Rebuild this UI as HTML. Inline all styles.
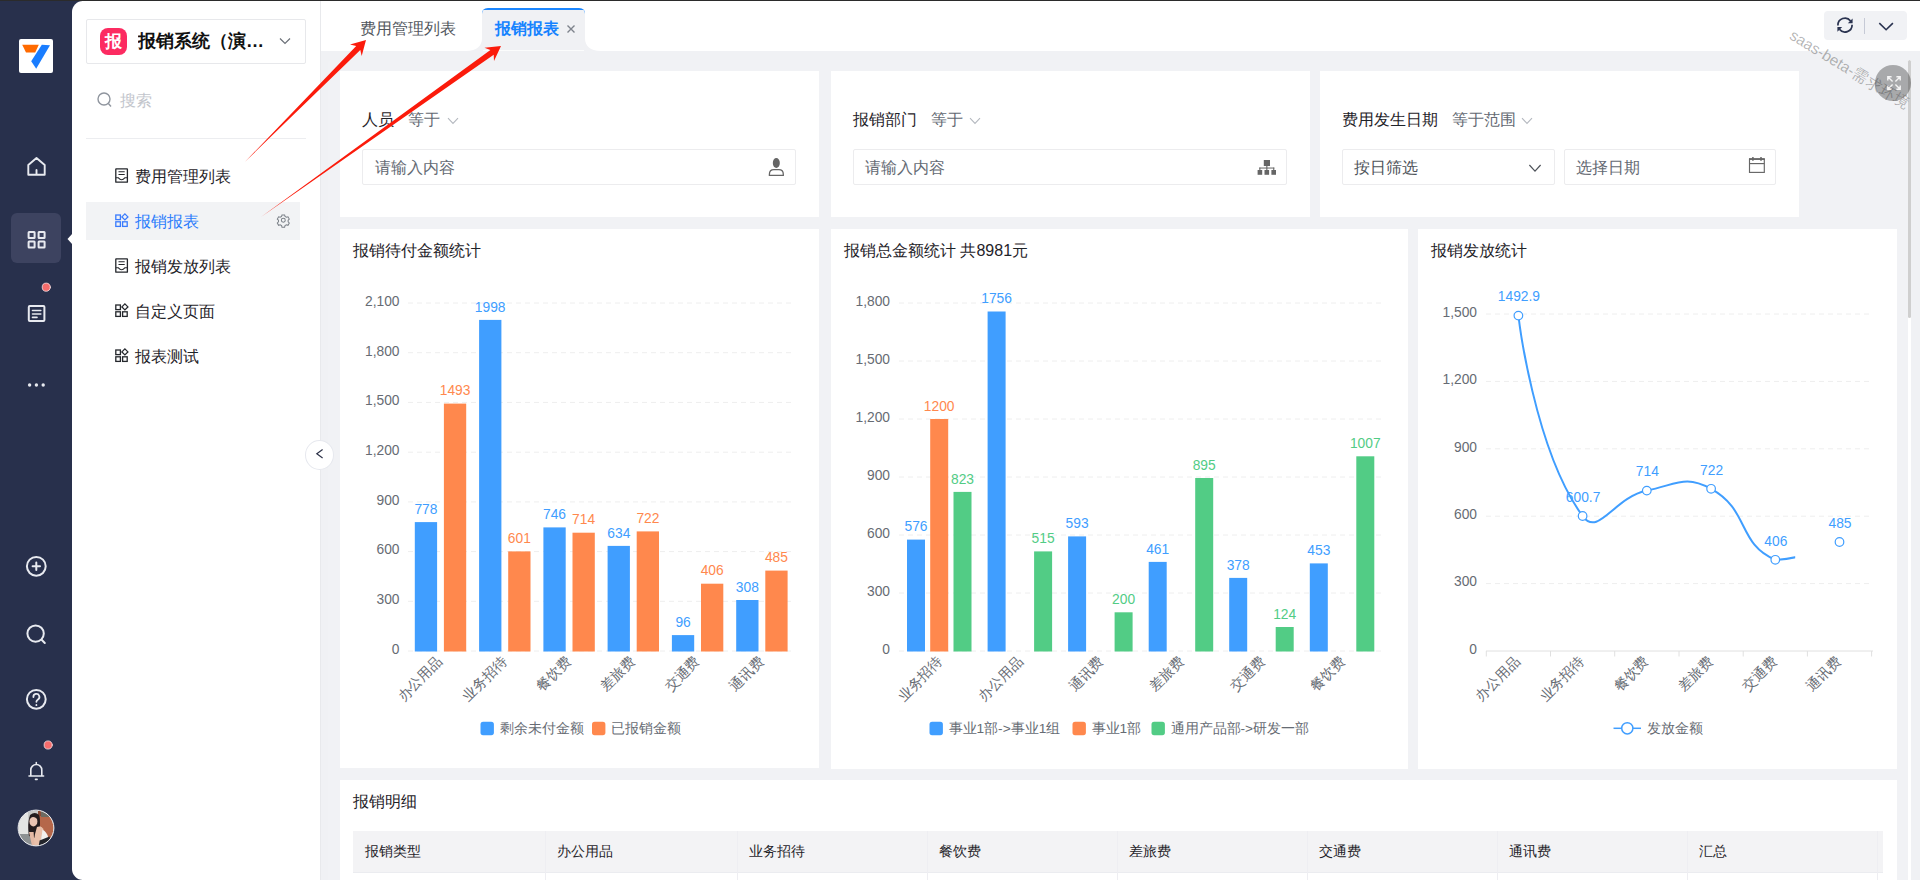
<!DOCTYPE html>
<html lang="zh"><head><meta charset="utf-8"><title>报销报表</title><style>
*{box-sizing:border-box;margin:0;padding:0}
html,body{width:1920px;height:880px;overflow:hidden}
body{position:relative;background:#f0f1f4;font-family:"Liberation Sans",sans-serif;color:#1f2329;font-size:16px}
.abs{position:absolute}
.t{position:absolute;white-space:nowrap;line-height:20px;height:20px}
#rail{left:0;top:0;width:82px;height:880px;background:#28304c}
#menu{left:72px;top:1px;width:249px;height:879px;background:#fff;border-radius:11px 0 0 11px;border-right:1px solid #e8e9ec}
#topline{left:0;top:0;width:1920px;height:1px;background:#2b2b2b;z-index:50}
#tabs{left:321px;top:1px;width:1599px;height:50px;background:#fff}
.panel{position:absolute;background:#fff}
.inp{position:absolute;height:36px;border:1px solid #ececee;border-radius:2px;background:#fff}
.g6{color:#646a73}
svg{position:absolute;overflow:visible}
svg text{font-family:"Liberation Sans",sans-serif}
</style></head><body>

<div class="abs" style="left:328px;top:60px;width:1583px;height:830px;background:#f1f2f5;border-radius:4px 0 0 0"></div>
<div class="panel" style="left:340px;top:71px;width:479px;height:146px"></div>
<div class="panel" style="left:831px;top:71px;width:479px;height:146px"></div>
<div class="panel" style="left:1320px;top:71px;width:479px;height:146px"></div>

<div class="t" style="left:362px;top:110px">人员</div>
<div class="t g6" style="left:408px;top:110px">等于</div>
<svg style="left:447px;top:117px" width="12" height="8" viewBox="0 0 12 8" fill="none" stroke="#b4b8bf" stroke-width="1.1"><path d="M1 1.2 L6 6.4 L11 1.2"/></svg>
<div class="inp" style="left:362px;top:149px;width:434px"></div>
<div class="t g6" style="left:375px;top:158px">请输入内容</div>
<svg style="left:760px;top:150px" width="32" height="32" viewBox="760 150 32 32"><ellipse cx="776.3" cy="163" rx="3.5" ry="4.9" fill="#666"/><path d="M769.4 175.4 H783.3 V174.2 Q783.3 169.7 778.8 169.7 H773.9 Q769.4 169.7 769.4 174.2 Z" fill="none" stroke="#666" stroke-width="1.3"/></svg>

<div class="t" style="left:853px;top:110px">报销部门</div>
<div class="t g6" style="left:931px;top:110px">等于</div>
<svg style="left:969px;top:117px" width="12" height="8" viewBox="0 0 12 8" fill="none" stroke="#b4b8bf" stroke-width="1.1"><path d="M1 1.2 L6 6.4 L11 1.2"/></svg>
<div class="inp" style="left:853px;top:149px;width:434px"></div>
<div class="t g6" style="left:865px;top:158px">请输入内容</div>
<svg style="left:1250px;top:150px" width="32" height="32" viewBox="1250 150 32 32" fill="#666"><rect x="1263.8" y="160" width="6.2" height="6"/><rect x="1257.6" y="170" width="4.6" height="4.8"/><rect x="1264.5" y="170" width="4.6" height="4.8"/><rect x="1271.4" y="170" width="4.6" height="4.8"/><rect x="1259.3" y="167.4" width="15" height="1.3" fill="#8a8a8a"/><rect x="1266.3" y="165.5" width="1.1" height="5"/><rect x="1259.3" y="167.6" width="1.1" height="2.6"/><rect x="1273.2" y="167.6" width="1.1" height="2.6"/></svg>

<div class="t" style="left:1342px;top:110px">费用发生日期</div>
<div class="t g6" style="left:1452px;top:110px">等于范围</div>
<svg style="left:1521px;top:117px" width="12" height="8" viewBox="0 0 12 8" fill="none" stroke="#b4b8bf" stroke-width="1.1"><path d="M1 1.2 L6 6.4 L11 1.2"/></svg>
<div class="inp" style="left:1342px;top:149px;width:213px"></div>
<div class="t" style="left:1354px;top:158px;color:#4e535a">按日筛选</div>
<svg style="left:1529px;top:164px" width="12" height="9" viewBox="0 0 12 9" fill="none" stroke="#4e535a" stroke-width="1.2"><path d="M0.4 1 L6 7.2 L11.6 1"/></svg>
<div class="inp" style="left:1564px;top:149px;width:212px"></div>
<div class="t g6" style="left:1576px;top:158px">选择日期</div>
<svg style="left:1740px;top:150px" width="32" height="32" viewBox="1740 150 32 32" fill="none" stroke="#666" stroke-width="1.15"><rect x="1749.5" y="159.2" width="14.8" height="13.2"/><path d="M1749.5 163.6 H1764.3"/><path d="M1749 159 H1764.8" stroke-width="1.7"/><path d="M1752.9 157 V160.8 M1761 157 V160.8" stroke-width="1.5"/></svg>

<div class="panel" style="left:340px;top:229px;width:479px;height:539px"></div>
<div class="panel" style="left:831px;top:229px;width:577px;height:540px"></div>
<div class="panel" style="left:1418px;top:229px;width:479px;height:540px"></div>
<div class="t" style="left:353px;top:241px">报销待付金额统计</div>
<div class="t" style="left:844px;top:241px">报销总金额统计 共8981元</div>
<div class="t" style="left:1431px;top:241px">报销发放统计</div>
<svg style="left:0;top:0" width="1920" height="880" viewBox="0 0 1920 880"><line x1="408" x2="791" y1="651.0" y2="651.0" stroke="#eeeeee" stroke-width="1" stroke-dasharray="5 4"/><line x1="408" x2="791" y1="601.3" y2="601.3" stroke="#eeeeee" stroke-width="1" stroke-dasharray="5 4"/><line x1="408" x2="791" y1="551.6" y2="551.6" stroke="#eeeeee" stroke-width="1" stroke-dasharray="5 4"/><line x1="408" x2="791" y1="501.9" y2="501.9" stroke="#eeeeee" stroke-width="1" stroke-dasharray="5 4"/><line x1="408" x2="791" y1="452.2" y2="452.2" stroke="#eeeeee" stroke-width="1" stroke-dasharray="5 4"/><line x1="408" x2="791" y1="402.4" y2="402.4" stroke="#eeeeee" stroke-width="1" stroke-dasharray="5 4"/><line x1="408" x2="791" y1="352.7" y2="352.7" stroke="#eeeeee" stroke-width="1" stroke-dasharray="5 4"/><line x1="408" x2="791" y1="303.0" y2="303.0" stroke="#eeeeee" stroke-width="1" stroke-dasharray="5 4"/><text transform="translate(399.5,653.8) scale(0.92,1)" text-anchor="end" font-size="15" fill="#666b73">0</text><text transform="translate(399.5,604.1) scale(0.92,1)" text-anchor="end" font-size="15" fill="#666b73">300</text><text transform="translate(399.5,554.4) scale(0.92,1)" text-anchor="end" font-size="15" fill="#666b73">600</text><text transform="translate(399.5,504.7) scale(0.92,1)" text-anchor="end" font-size="15" fill="#666b73">900</text><text transform="translate(399.5,455.0) scale(0.92,1)" text-anchor="end" font-size="15" fill="#666b73">1,200</text><text transform="translate(399.5,405.2) scale(0.92,1)" text-anchor="end" font-size="15" fill="#666b73">1,500</text><text transform="translate(399.5,355.5) scale(0.92,1)" text-anchor="end" font-size="15" fill="#666b73">1,800</text><text transform="translate(399.5,305.8) scale(0.92,1)" text-anchor="end" font-size="15" fill="#666b73">2,100</text><rect x="414.8" y="522.1" width="22.3" height="129.4" fill="#409eff"/><text transform="translate(425.9,513.7) scale(0.92,1)" text-anchor="middle" font-size="15" fill="#409eff">778</text><rect x="443.9" y="403.6" width="22.3" height="247.9" fill="#ff884d"/><text transform="translate(455.1,395.2) scale(0.92,1)" text-anchor="middle" font-size="15" fill="#ff884d">1493</text><rect x="479.1" y="319.9" width="22.3" height="331.6" fill="#409eff"/><text transform="translate(490.2,311.5) scale(0.92,1)" text-anchor="middle" font-size="15" fill="#409eff">1998</text><rect x="508.2" y="551.4" width="22.3" height="100.1" fill="#ff884d"/><text transform="translate(519.3,543.0) scale(0.92,1)" text-anchor="middle" font-size="15" fill="#ff884d">601</text><rect x="543.4" y="527.4" width="22.3" height="124.1" fill="#409eff"/><text transform="translate(554.5,519.0) scale(0.92,1)" text-anchor="middle" font-size="15" fill="#409eff">746</text><rect x="572.5" y="532.7" width="22.3" height="118.8" fill="#ff884d"/><text transform="translate(583.6,524.3) scale(0.92,1)" text-anchor="middle" font-size="15" fill="#ff884d">714</text><rect x="607.6" y="545.9" width="22.3" height="105.6" fill="#409eff"/><text transform="translate(618.8,537.5) scale(0.92,1)" text-anchor="middle" font-size="15" fill="#409eff">634</text><rect x="636.7" y="531.4" width="22.3" height="120.1" fill="#ff884d"/><text transform="translate(647.9,523.0) scale(0.92,1)" text-anchor="middle" font-size="15" fill="#ff884d">722</text><rect x="671.9" y="635.1" width="22.3" height="16.4" fill="#409eff"/><text transform="translate(683.1,626.7) scale(0.92,1)" text-anchor="middle" font-size="15" fill="#409eff">96</text><rect x="701.0" y="583.7" width="22.3" height="67.8" fill="#ff884d"/><text transform="translate(712.2,575.3) scale(0.92,1)" text-anchor="middle" font-size="15" fill="#ff884d">406</text><rect x="736.2" y="600.0" width="22.3" height="51.5" fill="#409eff"/><text transform="translate(747.3,591.6) scale(0.92,1)" text-anchor="middle" font-size="15" fill="#409eff">308</text><rect x="765.3" y="570.6" width="22.3" height="80.9" fill="#ff884d"/><text transform="translate(776.4,562.2) scale(0.92,1)" text-anchor="middle" font-size="15" fill="#ff884d">485</text><text transform="translate(443.1,662.5) rotate(-45)" text-anchor="end" font-size="14" fill="#666b73">办公用品</text><text transform="translate(507.4,662.5) rotate(-45)" text-anchor="end" font-size="14" fill="#666b73">业务招待</text><text transform="translate(571.7,662.5) rotate(-45)" text-anchor="end" font-size="14" fill="#666b73">餐饮费</text><text transform="translate(636.0,662.5) rotate(-45)" text-anchor="end" font-size="14" fill="#666b73">差旅费</text><text transform="translate(700.3,662.5) rotate(-45)" text-anchor="end" font-size="14" fill="#666b73">交通费</text><text transform="translate(764.5,662.5) rotate(-45)" text-anchor="end" font-size="14" fill="#666b73">通讯费</text><rect x="480.5" y="721.8" width="13.4" height="13.4" rx="2.6" fill="#409eff"/><text x="499.5" y="732.8" font-size="13.7" fill="#666b73">剩余未付金额</text><rect x="592" y="721.8" width="13.4" height="13.4" rx="2.6" fill="#ff884d"/><text x="611" y="732.8" font-size="13.7" fill="#666b73">已报销金额</text></svg><svg style="left:0;top:0" width="1920" height="880" viewBox="0 0 1920 880"><line x1="899" x2="1381" y1="651.0" y2="651.0" stroke="#eeeeee" stroke-width="1" stroke-dasharray="5 4"/><line x1="899" x2="1381" y1="593.0" y2="593.0" stroke="#eeeeee" stroke-width="1" stroke-dasharray="5 4"/><line x1="899" x2="1381" y1="535.0" y2="535.0" stroke="#eeeeee" stroke-width="1" stroke-dasharray="5 4"/><line x1="899" x2="1381" y1="477.0" y2="477.0" stroke="#eeeeee" stroke-width="1" stroke-dasharray="5 4"/><line x1="899" x2="1381" y1="419.0" y2="419.0" stroke="#eeeeee" stroke-width="1" stroke-dasharray="5 4"/><line x1="899" x2="1381" y1="361.0" y2="361.0" stroke="#eeeeee" stroke-width="1" stroke-dasharray="5 4"/><line x1="899" x2="1381" y1="303.0" y2="303.0" stroke="#eeeeee" stroke-width="1" stroke-dasharray="5 4"/><text transform="translate(890.0,653.8) scale(0.92,1)" text-anchor="end" font-size="15" fill="#666b73">0</text><text transform="translate(890.0,595.8) scale(0.92,1)" text-anchor="end" font-size="15" fill="#666b73">300</text><text transform="translate(890.0,537.8) scale(0.92,1)" text-anchor="end" font-size="15" fill="#666b73">600</text><text transform="translate(890.0,479.8) scale(0.92,1)" text-anchor="end" font-size="15" fill="#666b73">900</text><text transform="translate(890.0,421.8) scale(0.92,1)" text-anchor="end" font-size="15" fill="#666b73">1,200</text><text transform="translate(890.0,363.8) scale(0.92,1)" text-anchor="end" font-size="15" fill="#666b73">1,500</text><text transform="translate(890.0,305.8) scale(0.92,1)" text-anchor="end" font-size="15" fill="#666b73">1,800</text><rect x="907.0" y="539.6" width="18" height="111.9" fill="#409eff"/><text transform="translate(916.0,531.2) scale(0.92,1)" text-anchor="middle" font-size="15" fill="#409eff">576</text><rect x="930.2" y="419.0" width="18" height="232.5" fill="#ff884d"/><text transform="translate(939.2,410.6) scale(0.92,1)" text-anchor="middle" font-size="15" fill="#ff884d">1200</text><rect x="953.5" y="491.9" width="18" height="159.6" fill="#52cc85"/><text transform="translate(962.5,483.5) scale(0.92,1)" text-anchor="middle" font-size="15" fill="#52cc85">823</text><rect x="987.6" y="311.5" width="18" height="340.0" fill="#409eff"/><text transform="translate(996.6,303.1) scale(0.92,1)" text-anchor="middle" font-size="15" fill="#409eff">1756</text><rect x="1034.1" y="551.4" width="18" height="100.1" fill="#52cc85"/><text transform="translate(1043.1,543.0) scale(0.92,1)" text-anchor="middle" font-size="15" fill="#52cc85">515</text><rect x="1068.1" y="536.4" width="18" height="115.1" fill="#409eff"/><text transform="translate(1077.1,528.0) scale(0.92,1)" text-anchor="middle" font-size="15" fill="#409eff">593</text><rect x="1114.6" y="612.3" width="18" height="39.2" fill="#52cc85"/><text transform="translate(1123.6,603.9) scale(0.92,1)" text-anchor="middle" font-size="15" fill="#52cc85">200</text><rect x="1148.7" y="561.9" width="18" height="89.6" fill="#409eff"/><text transform="translate(1157.7,553.5) scale(0.92,1)" text-anchor="middle" font-size="15" fill="#409eff">461</text><rect x="1195.2" y="478.0" width="18" height="173.5" fill="#52cc85"/><text transform="translate(1204.2,469.6) scale(0.92,1)" text-anchor="middle" font-size="15" fill="#52cc85">895</text><rect x="1229.2" y="577.9" width="18" height="73.6" fill="#409eff"/><text transform="translate(1238.2,569.5) scale(0.92,1)" text-anchor="middle" font-size="15" fill="#409eff">378</text><rect x="1275.7" y="627.0" width="18" height="24.5" fill="#52cc85"/><text transform="translate(1284.7,618.6) scale(0.92,1)" text-anchor="middle" font-size="15" fill="#52cc85">124</text><rect x="1309.8" y="563.4" width="18" height="88.1" fill="#409eff"/><text transform="translate(1318.8,555.0) scale(0.92,1)" text-anchor="middle" font-size="15" fill="#409eff">453</text><rect x="1356.3" y="456.3" width="18" height="195.2" fill="#52cc85"/><text transform="translate(1365.3,447.9) scale(0.92,1)" text-anchor="middle" font-size="15" fill="#52cc85">1007</text><text transform="translate(943.2,662.5) rotate(-45)" text-anchor="end" font-size="14" fill="#666b73">业务招待</text><text transform="translate(1023.7,662.5) rotate(-45)" text-anchor="end" font-size="14" fill="#666b73">办公用品</text><text transform="translate(1104.3,662.5) rotate(-45)" text-anchor="end" font-size="14" fill="#666b73">通讯费</text><text transform="translate(1184.9,662.5) rotate(-45)" text-anchor="end" font-size="14" fill="#666b73">差旅费</text><text transform="translate(1265.4,662.5) rotate(-45)" text-anchor="end" font-size="14" fill="#666b73">交通费</text><text transform="translate(1346.0,662.5) rotate(-45)" text-anchor="end" font-size="14" fill="#666b73">餐饮费</text><rect x="929.5" y="721.8" width="13.4" height="13.4" rx="2.6" fill="#409eff"/><text x="948.5" y="732.8" font-size="13.7" fill="#666b73">事业1部-&gt;事业1组</text><rect x="1072.5" y="721.8" width="13.4" height="13.4" rx="2.6" fill="#ff884d"/><text x="1091.5" y="732.8" font-size="13.7" fill="#666b73">事业1部</text><rect x="1151.5" y="721.8" width="13.4" height="13.4" rx="2.6" fill="#52cc85"/><text x="1170.5" y="732.8" font-size="13.7" fill="#666b73">通用产品部-&gt;研发一部</text></svg><svg style="left:0;top:0" width="1920" height="880" viewBox="0 0 1920 880"><defs><clipPath id="lc"><rect x="1480" y="280" width="315.2" height="400"/></clipPath></defs><line x1="1486" x2="1872" y1="583.6" y2="583.6" stroke="#eeeeee" stroke-width="1" stroke-dasharray="5 4"/><line x1="1486" x2="1872" y1="516.2" y2="516.2" stroke="#eeeeee" stroke-width="1" stroke-dasharray="5 4"/><line x1="1486" x2="1872" y1="448.8" y2="448.8" stroke="#eeeeee" stroke-width="1" stroke-dasharray="5 4"/><line x1="1486" x2="1872" y1="381.4" y2="381.4" stroke="#eeeeee" stroke-width="1" stroke-dasharray="5 4"/><line x1="1486" x2="1872" y1="314.0" y2="314.0" stroke="#eeeeee" stroke-width="1" stroke-dasharray="5 4"/><text transform="translate(1477.0,653.8) scale(0.92,1)" text-anchor="end" font-size="15" fill="#666b73">0</text><text transform="translate(1477.0,586.4) scale(0.92,1)" text-anchor="end" font-size="15" fill="#666b73">300</text><text transform="translate(1477.0,519.0) scale(0.92,1)" text-anchor="end" font-size="15" fill="#666b73">600</text><text transform="translate(1477.0,451.6) scale(0.92,1)" text-anchor="end" font-size="15" fill="#666b73">900</text><text transform="translate(1477.0,384.2) scale(0.92,1)" text-anchor="end" font-size="15" fill="#666b73">1,200</text><text transform="translate(1477.0,316.8) scale(0.92,1)" text-anchor="end" font-size="15" fill="#666b73">1,500</text><line x1="1486" x2="1873" y1="651.0" y2="651.0" stroke="#e0e0e0" stroke-width="1"/><line x1="1486.3" x2="1486.3" y1="651.0" y2="656.5" stroke="#e0e0e0" stroke-width="1"/><line x1="1550.5" x2="1550.5" y1="651.0" y2="656.5" stroke="#e0e0e0" stroke-width="1"/><line x1="1614.7" x2="1614.7" y1="651.0" y2="656.5" stroke="#e0e0e0" stroke-width="1"/><line x1="1679.0" x2="1679.0" y1="651.0" y2="656.5" stroke="#e0e0e0" stroke-width="1"/><line x1="1743.2" x2="1743.2" y1="651.0" y2="656.5" stroke="#e0e0e0" stroke-width="1"/><line x1="1807.4" x2="1807.4" y1="651.0" y2="656.5" stroke="#e0e0e0" stroke-width="1"/><line x1="1871.6" x2="1871.6" y1="651.0" y2="656.5" stroke="#e0e0e0" stroke-width="1"/><path d="M1518.41 315.60 C1518.41 315.60 1534.28 450.17 1582.63 516.04 C1598.50 537.66 1613.58 497.65 1646.85 490.59 C1677.80 484.02 1685.28 474.90 1711.07 488.79 C1749.50 509.49 1737.42 544.09 1775.29 559.79 C1801.64 559.79 1839.51 542.04 1839.51 542.04" fill="none" stroke="#409eff" stroke-width="2" clip-path="url(#lc)"/><circle cx="1518.4" cy="315.6" r="4.3" fill="#fff" stroke="#409eff" stroke-width="1.2"/><text transform="translate(1518.9,301.3) scale(0.92,1)" text-anchor="middle" font-size="15" fill="#409eff">1492.9</text><circle cx="1582.6" cy="516.0" r="4.3" fill="#fff" stroke="#409eff" stroke-width="1.2"/><text transform="translate(1583.1,501.7) scale(0.92,1)" text-anchor="middle" font-size="15" fill="#409eff">600.7</text><circle cx="1646.8" cy="490.6" r="4.3" fill="#fff" stroke="#409eff" stroke-width="1.2"/><text transform="translate(1647.3,476.3) scale(0.92,1)" text-anchor="middle" font-size="15" fill="#409eff">714</text><circle cx="1711.1" cy="488.8" r="4.3" fill="#fff" stroke="#409eff" stroke-width="1.2"/><text transform="translate(1711.6,474.5) scale(0.92,1)" text-anchor="middle" font-size="15" fill="#409eff">722</text><circle cx="1775.3" cy="559.8" r="4.3" fill="#fff" stroke="#409eff" stroke-width="1.2"/><text transform="translate(1775.8,545.5) scale(0.92,1)" text-anchor="middle" font-size="15" fill="#409eff">406</text><circle cx="1839.5" cy="542.0" r="4.3" fill="#fff" stroke="#409eff" stroke-width="1.2"/><text transform="translate(1840.0,527.7) scale(0.92,1)" text-anchor="middle" font-size="15" fill="#409eff">485</text><text transform="translate(1520.9,662.5) rotate(-45)" text-anchor="end" font-size="14" fill="#666b73">办公用品</text><text transform="translate(1585.1,662.5) rotate(-45)" text-anchor="end" font-size="14" fill="#666b73">业务招待</text><text transform="translate(1649.3,662.5) rotate(-45)" text-anchor="end" font-size="14" fill="#666b73">餐饮费</text><text transform="translate(1713.6,662.5) rotate(-45)" text-anchor="end" font-size="14" fill="#666b73">差旅费</text><text transform="translate(1777.8,662.5) rotate(-45)" text-anchor="end" font-size="14" fill="#666b73">交通费</text><text transform="translate(1842.0,662.5) rotate(-45)" text-anchor="end" font-size="14" fill="#666b73">通讯费</text><line x1="1613.5" x2="1641" y1="728.3" y2="728.3" stroke="#409eff" stroke-width="1.5"/><circle cx="1627.3" cy="728.3" r="5.6" fill="#fff" stroke="#409eff" stroke-width="1.5"/><text x="1647" y="733" font-size="13.7" fill="#666b73">发放金额</text></svg>
<div class="panel" style="left:340px;top:780px;width:1557px;height:110px"></div>
<div class="t" style="left:353px;top:792px">报销明细</div>
<div class="abs" style="left:353px;top:831px;width:1530px;height:42px;background:#f3f3f5;border-bottom:1px solid #ebecf0"></div>
<div class="t" style="left:365px;top:841px;font-size:14px;color:#1f2329">报销类型</div><div class="t" style="left:557px;top:841px;font-size:14px;color:#1f2329">办公用品</div><div class="t" style="left:749px;top:841px;font-size:14px;color:#1f2329">业务招待</div><div class="t" style="left:939px;top:841px;font-size:14px;color:#1f2329">餐饮费</div><div class="t" style="left:1129px;top:841px;font-size:14px;color:#1f2329">差旅费</div><div class="t" style="left:1319px;top:841px;font-size:14px;color:#1f2329">交通费</div><div class="t" style="left:1509px;top:841px;font-size:14px;color:#1f2329">通讯费</div><div class="t" style="left:1699px;top:841px;font-size:14px;color:#1f2329">汇总</div><div class="abs" style="left:545px;top:831px;width:1px;height:49px;background:#eeeef2"></div><div class="abs" style="left:737px;top:831px;width:1px;height:49px;background:#eeeef2"></div><div class="abs" style="left:927px;top:831px;width:1px;height:49px;background:#eeeef2"></div><div class="abs" style="left:1117px;top:831px;width:1px;height:49px;background:#eeeef2"></div><div class="abs" style="left:1307px;top:831px;width:1px;height:49px;background:#eeeef2"></div><div class="abs" style="left:1497px;top:831px;width:1px;height:49px;background:#eeeef2"></div><div class="abs" style="left:1687px;top:831px;width:1px;height:49px;background:#eeeef2"></div><div class="abs" style="left:1877px;top:831px;width:1px;height:49px;background:#eeeef2"></div>
<div id="tabs" class="abs"></div>
<!-- active tab -->
<svg style="left:466px;top:7px" width="136" height="45" viewBox="466 7 136 45">
 <path d="M466.5 52 H600.5 V51 C590.5 51 585 46 585 38.5 V14 Q585 8 579 8 H488 Q482 8 482 14 V38.5 C482 46 476.5 51 466.5 51 Z" fill="#f0f1f4"/>
 <path d="M482 14 Q482 8 488 8 H579 Q585 8 585 14 L585 11.5 Q585 10 583 10 H484 Q482 10 482 11.5 Z" fill="#1a86ff"/>
</svg>
<div class="abs" style="left:483px;top:50px;width:101px;height:1px;background:rgba(255,255,255,.75)"></div>
<div class="t" style="left:360px;top:19px;color:#51565d">费用管理列表</div>
<div class="t" style="left:495px;top:19px;color:#1683ff;font-weight:bold">报销报表</div>
<svg style="left:566px;top:24px" width="10" height="10" viewBox="0 0 10 10" stroke="#7d838c" stroke-width="1.4"><path d="M1.5 1.5 L8.5 8.5 M8.5 1.5 L1.5 8.5"/></svg>
<!-- refresh box -->
<div class="abs" style="left:1824px;top:11px;width:83px;height:29px;border-radius:4px;background:#f1f2f5"></div>
<svg style="left:1836px;top:16px" width="18" height="18" viewBox="0 0 18 18" fill="none" stroke="#2a3350" stroke-width="1.7"><path d="M1.9 9.4 A7.1 7.1 0 0 1 14.6 4.9 M16.1 8.8 A7.1 7.1 0 0 1 3.4 13.3"/><path d="M16.6 2.4 V7.2 H11.8 Z M1.4 15.8 V11 H6.2 Z" fill="#2a3350" stroke="none"/></svg>
<div class="abs" style="left:1864px;top:18px;width:1px;height:16px;background:#c6cad6"></div>
<svg style="left:1878px;top:22px" width="16" height="10" viewBox="0 0 16 10" fill="none" stroke="#2a3350" stroke-width="1.6"><path d="M1.3 1.1 L8.1 7.7 L14.9 1.1"/></svg>

<div id="rail" class="abs"></div>
<div id="menu" class="abs"></div>
<div id="topline" class="abs"></div>
<!-- logo -->
<div class="abs" style="left:19px;top:39px;width:34px;height:34px;background:#fff;border-radius:2px"></div>
<svg style="left:19px;top:39px" width="34" height="34" viewBox="19 39 34 34">
 <polygon points="22.2,44.8 38.8,44.8 35.2,52.4 26,52.4" fill="#ff6a00"/>
 <polygon points="41.8,44.8 50,45.2 36.2,68.8 31.2,61.2" fill="#1a7dff"/>
</svg>
<!-- rail active bg -->
<div class="abs" style="left:11px;top:213px;width:50px;height:50px;border-radius:6px;background:#3d4360"></div>
<svg style="left:0;top:0" width="82" height="880" viewBox="0 0 82 880" fill="none" stroke="#e8eaf0" stroke-width="2" stroke-linecap="round" stroke-linejoin="round">
 <polygon points="67.5,239 72.5,233.5 72.5,244.5" fill="#fff" stroke="none"/>
 <!-- home -->
 <path d="M28.3 165 L36.5 158 L44.7 165 V174.8 H28.3 Z M36.5 174.5 V170" stroke-width="1.9"/>
 <!-- apps -->
 <rect x="28.6" y="232" width="6" height="6" rx="0.5"/><rect x="38.6" y="232" width="6" height="6" rx="0.5"/>
 <rect x="28.6" y="241.4" width="6" height="6" rx="0.5"/><rect x="38.6" y="241.4" width="6" height="6" rx="0.5"/>
 <!-- doc -->
 <rect x="28.8" y="306" width="15.6" height="15" rx="1"/>
 <path d="M32.5 310.5 H40.8 M32.5 314 H40.8 M32.5 317.4 H37" stroke-width="1.6"/>
 <!-- dots -->
 <circle cx="29.6" cy="385" r="1.7" fill="#e8eaf0" stroke="none"/><circle cx="36.4" cy="385" r="1.7" fill="#e8eaf0" stroke="none"/><circle cx="43.2" cy="385" r="1.7" fill="#e8eaf0" stroke="none"/>
 <!-- plus circle -->
 <circle cx="36.3" cy="566.3" r="9.4"/><path d="M36.3 562.6 V570 M32.6 566.3 H40"/>
 <!-- search -->
 <circle cx="35.6" cy="633.6" r="8.2"/><path d="M41.6 639.8 L44.8 643"/>
 <!-- help -->
 <circle cx="36.3" cy="699.3" r="9.4"/><path d="M33.4 697 a3 3 0 1 1 4.6 2.4 c-1 .7 -1.6 1.2 -1.6 2.4 M36.4 705 v.2" stroke-width="1.8"/>
 <!-- bell -->
 <path d="M29 776 H43.6 M30.8 775.5 V770 a5.5 5.5 0 0 1 11 0 V775.5 M36.3 762.6 V764 M35.5 779.4 H37.1" stroke-width="1.6"/>
 <!-- red dots -->
 <circle cx="46.3" cy="287.2" r="4.1" fill="#f56c6c" stroke="#f3e3e6" stroke-width=".8"/><circle cx="48.2" cy="745" r="4.1" fill="#f56c6c" stroke="#f3e3e6" stroke-width=".8"/>
</svg>
<!-- avatar -->
<svg style="left:17px;top:809px" width="38" height="38" viewBox="17 809 38 38">
 <defs><clipPath id="av"><circle cx="36" cy="828" r="17.6"/></clipPath></defs>
 <g clip-path="url(#av)">
  <rect x="17" y="809" width="38" height="38" fill="#c9cac8"/>
  <rect x="17" y="834" width="16" height="13" fill="#8d9192"/>
  <rect x="19" y="812" width="9" height="22" fill="#e4e5e3"/>
  <rect x="38" y="810" width="4" height="16" fill="#8a4a35"/>
  <path d="M40 816 H56 V842 L46 836 L40 826 Z" fill="#b5674a"/>
  <rect x="41" y="811" width="14" height="6" fill="#6d6a62"/>
  <path d="M30 815 Q35 811 39 815 Q41 822 39 832 L35 838 L29 836 Q27 824 30 815 Z" fill="#231c1e"/>
  <ellipse cx="33.4" cy="821.5" rx="4" ry="5" fill="#e8c3b2"/>
  <path d="M30.2 818.5 Q33 815.6 37.6 818.8 L37.8 816.4 Q33 813.5 29.6 817.2 Z" fill="#231c1e"/>
  <path d="M37 827 Q41 825.5 43.5 829 L39 846 H33 L35 834 Z" fill="#e9c0aa"/>
  <path d="M29 832 L32 846 L34.6 846 L33.6 832 Z" fill="#e4b9a4"/>
  <path d="M42.5 829.5 Q47 832 48.5 838 L41 841 Z" fill="#f3f1ee"/>
  <path d="M39.6 840.5 L49.5 836.5 L51 841 L45 846.5 H38.6 Z" fill="#22242b"/>
 </g>
 <circle cx="36" cy="828" r="17.9" fill="none" stroke="#f1f1f3" stroke-width="1"/>
</svg>

<!-- app selector -->
<div class="abs" style="left:86px;top:19px;width:220px;height:45px;border:1px solid #e7e8eb;border-radius:2px"></div>
<div class="abs" style="left:100px;top:28px;width:27px;height:27px;border-radius:8px;background:#fc2b61"></div>
<div class="t" style="left:105px;top:31px;font-size:17px;font-weight:bold;color:#fff;line-height:21px">报</div>
<div class="t" style="left:138px;top:30px;font-size:18px;font-weight:bold;color:#111;line-height:22px;width:130px;overflow:hidden">报销系统（演…</div>
<svg style="left:279px;top:37px" width="12" height="8" viewBox="0 0 12 8" fill="none" stroke="#6b7078" stroke-width="1.2"><path d="M1 1.5 L6 6.5 L11 1.5"/></svg>
<!-- search -->
<svg style="left:96px;top:91px" width="18" height="18" viewBox="0 0 18 18" fill="none" stroke="#8f959e" stroke-width="1.4"><circle cx="8" cy="8" r="6"/><path d="M12.4 12.6 L15 15.4"/></svg>
<div class="t" style="left:120px;top:91px;color:#c2c5cc">搜索</div>
<div class="abs" style="left:86px;top:138px;width:220px;height:1px;background:#ecedf0"></div>
<!-- items -->
<div class="abs" style="left:86px;top:202px;width:214px;height:38px;background:#f2f3f5"></div>
<svg style="left:0;top:0" width="320" height="400" viewBox="0 0 320 400" fill="none" stroke="#24272c" stroke-width="1.3">
 <g id="ic-list"><rect x="115.8" y="168.9" width="11.6" height="13.3" rx=".3"/><path d="M118.5 171.7 H124.7 M118.5 174.5 H124.7 M115.8 177.8 H118.4 Q121.6 181.6 124.8 177.8 H127.4" stroke-width="1.1"/></g>
 <g transform="translate(0,90)"><rect x="115.8" y="168.9" width="11.6" height="13.3" rx=".3"/><path d="M118.5 171.7 H124.7 M118.5 174.5 H124.7 M115.8 177.8 H118.4 Q121.6 181.6 124.8 177.8 H127.4" stroke-width="1.1"/></g>
 <g stroke="#3a7bfd"><rect x="115.8" y="215" width="4.6" height="4.6"/><rect x="115.8" y="221.8" width="4.6" height="4.6"/><rect x="122.6" y="221.8" width="4.6" height="4.6"/><path d="M124.9 213.9 L127.9 216.9 L124.9 219.9 L121.9 216.9 Z"/></g>
 <g transform="translate(0,90)"><rect x="115.8" y="215" width="4.6" height="4.6"/><rect x="115.8" y="221.8" width="4.6" height="4.6"/><rect x="122.6" y="221.8" width="4.6" height="4.6"/><path d="M124.9 213.9 L127.9 216.9 L124.9 219.9 L121.9 216.9 Z"/></g>
 <g transform="translate(0,135)"><rect x="115.8" y="215" width="4.6" height="4.6"/><rect x="115.8" y="221.8" width="4.6" height="4.6"/><rect x="122.6" y="221.8" width="4.6" height="4.6"/><path d="M124.9 213.9 L127.9 216.9 L124.9 219.9 L121.9 216.9 Z"/></g>
 <!-- gear -->
 <g stroke="#7b8088" stroke-width="1.25" transform="translate(283.3,220.3) scale(.82) translate(-283.2,-220.2)"><circle cx="283.2" cy="220.2" r="2.4"/><path d="M281.6 213.6 h3.2 l.5 1.9 1.7 1 1.9-.6 1.6 2.8 -1.4 1.4 v2 l1.4 1.4 -1.6 2.8 -1.9-.6 -1.7 1 -.5 1.9 h-3.2 l-.5-1.9 -1.7-1 -1.9.6 -1.6-2.8 1.4-1.4 v-2 l-1.4-1.4 1.6-2.8 1.9.6 1.7-1 z"/></g>
</svg>
<div class="t" style="left:135px;top:167px">费用管理列表</div>
<div class="t" style="left:135px;top:212px;color:#2b7cfc">报销报表</div>
<div class="t" style="left:135px;top:257px">报销发放列表</div>
<div class="t" style="left:135px;top:302px">自定义页面</div>
<div class="t" style="left:135px;top:347px">报表测试</div>
<!-- collapse -->
<div class="abs" style="left:305px;top:440px;width:29px;height:30px;border-radius:50%;background:#fff;border:1px solid #e6e8ee;z-index:5"></div>
<svg style="left:314px;top:448px;z-index:6" width="10" height="12" viewBox="0 0 10 12" fill="none" stroke="#2d3248" stroke-width="1.2"><path d="M8.6 1.4 L2.8 5.7 L8.6 10"/></svg>

<!-- scrollbar -->
<div class="abs" style="left:1908px;top:60px;width:3px;height:820px;background:#fff"></div>
<div class="abs" style="left:1908px;top:60px;width:3px;height:258px;background:#cfcfcf;border-radius:2px"></div>
<!-- float button -->
<div class="abs" style="left:1875px;top:65px;width:36px;height:36px;overflow:hidden;z-index:20"><div class="abs" style="left:0;top:0;width:36px;height:36px;border-radius:50%;background:rgba(0,0,0,.3)"></div>
<svg style="left:11.5px;top:10.5px" width="14" height="14" viewBox="0 0 14 14" fill="none" stroke="#f4f4f4" stroke-width="1.4"><path d="M1 1 L5.6 5.6 M13 1 L8.4 5.6 M1 13 L5.6 8.4 M13 13 L8.4 8.4 M0.8 4.6 V0.8 H4.6 M9.4 0.8 H13.2 V4.6 M0.8 9.4 V13.2 H4.6 M13.2 9.4 V13.2 H9.4"/></svg></div>
<!-- watermark -->
<div class="t" style="left:1791px;top:24px;font-size:15.5px;color:rgba(60,60,60,.38);transform-origin:0 50%;transform:rotate(31.4deg);z-index:30">saas-beta-需求环境</div>
<!-- arrows -->
<svg style="left:0;top:0;z-index:40" width="1920" height="880" viewBox="0 0 1920 880" fill="#fb1b0b">
 <polygon points="244.8,162.0 356.2,45.9 350.0,44.5 366.0,40.1 361.7,56.1 360.3,49.9"/>
 <polygon points="261.0,217.0 490.4,50.0 484.5,47.7 501.0,46.0 494.0,61.0 493.7,54.7"/>
</svg>

</body></html>
